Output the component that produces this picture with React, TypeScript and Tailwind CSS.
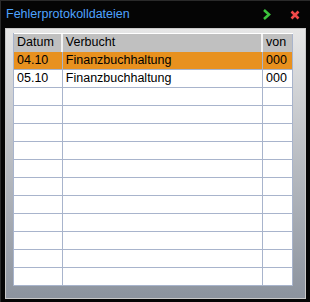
import React from 'react';

const rows = [
  { datum: '04.10', text: 'Finanzbuchhaltung', von: '000', selected: true },
  { datum: '05.10', text: 'Finanzbuchhaltung', von: '000', selected: false },
];

const App: React.FC = () => {
  const filler = Array.from({ length: 11 });
  return (
    <div
      className="w-[310px] h-[302px] bg-[#050505] border-t border-l border-[#2a2a2a] flex flex-col"
      style={{ fontFamily: '"Liberation Sans", Arial, sans-serif' }}
    >
      {/* title bar */}
      <div className="h-[27px] flex items-center pl-[5px] pr-[10px]">
        <span className="text-[12.5px] text-[#4fa3ff] leading-none">Fehlerprotokolldateien</span>
        <div className="ml-auto flex items-center gap-[19px]">
          <svg width="8" height="11" viewBox="0 0 8 11">
            <path d="M1 1 L6 5.5 L1 10" fill="none" stroke="#3cc43c" strokeWidth="2.6" strokeLinejoin="miter" />
          </svg>
          <svg width="10" height="10" viewBox="0 0 10 10">
            <path d="M1.5 1.5 L8.5 8.5 M8.5 1.5 L1.5 8.5" stroke="#f04848" strokeWidth="2.6" />
          </svg>
        </div>
      </div>

      {/* panel */}
      <div className="mx-[4px] mb-[3px] flex-1 bg-gradient-to-b from-[#e6e6e6] to-[#8c939e] border border-[#c8c8c8] pt-[4px] pl-[7px] pr-[12px]">
        <div className="border-l border-[#a8b4cc] text-[12.5px] text-black">
          <div className="flex h-[19px] bg-[#c0c0c0] border-t border-white leading-[17px]">
            <div className="w-[49px] pl-[3px] border-r-2 border-[#f2f2f2]">Datum</div>
            <div className="w-[201px] pl-[3px] border-r-2 border-[#f2f2f2]">Verbucht</div>
            <div className="w-[30px] pl-[3px] border-r border-[#a8b4cc]">von</div>
          </div>
          {rows.map((r, i) => (
            <div
              key={i}
              className={`flex h-[18px] leading-[17px] border-b border-[#a8b4cc] ${r.selected ? 'bg-[#e8911f]' : 'bg-white'}`}
            >
              <div className="w-[49px] pl-[3px] border-r border-[#a8b4cc]">{r.datum}</div>
              <div className="w-[201px] pl-[3px] border-r border-[#a8b4cc]">{r.text}</div>
              <div className="w-[30px] pl-[3px] border-r border-[#a8b4cc]">{r.von}</div>
            </div>
          ))}
          {filler.map((_, i) => (
            <div key={i} className="flex h-[18px] bg-white border-b border-[#a8b4cc]">
              <div className="w-[49px] border-r border-[#a8b4cc]" />
              <div className="w-[201px] border-r border-[#a8b4cc]" />
              <div className="w-[30px] border-r border-[#a8b4cc]" />
            </div>
          ))}
        </div>
      </div>
    </div>
  );
};

export default App;
